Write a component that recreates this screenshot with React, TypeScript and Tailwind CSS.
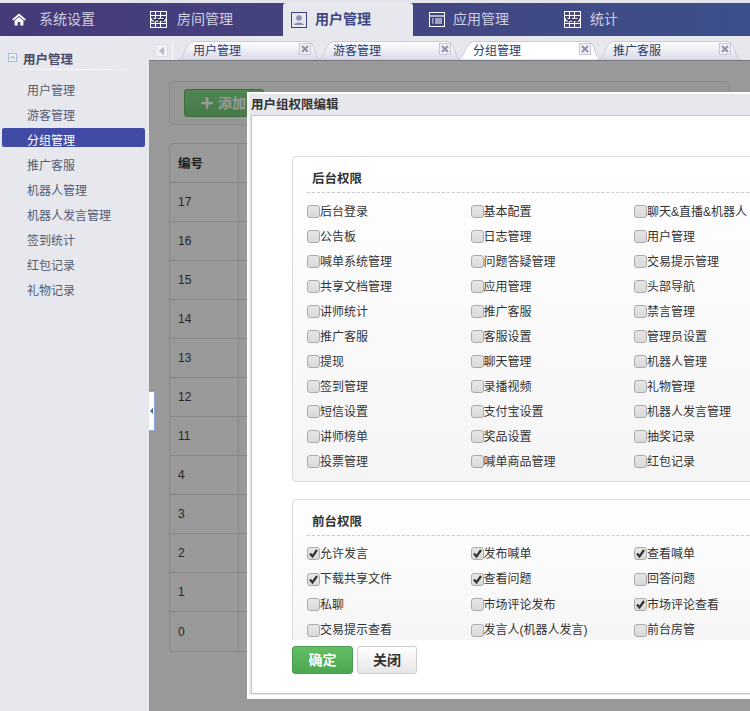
import React from 'react';
import { Plus } from 'lucide-react';

const FONT = '"Liberation Sans", "Noto Sans CJK SC", sans-serif';

const backPerms = [
  ['后台登录', '基本配置', '聊天&直播&机器人'],
  ['公告板', '日志管理', '用户管理'],
  ['喊单系统管理', '问题答疑管理', '交易提示管理'],
  ['共享文档管理', '应用管理', '头部导航'],
  ['讲师统计', '推广客服', '禁言管理'],
  ['推广客服', '客服设置', '管理员设置'],
  ['提现', '聊天管理', '机器人管理'],
  ['签到管理', '录播视频', '礼物管理'],
  ['短信设置', '支付宝设置', '机器人发言管理'],
  ['讲师榜单', '奖品设置', '抽奖记录'],
  ['投票管理', '喊单商品管理', '红包记录'],
];

const frontPerms = [
  ['允许发言', '发布喊单', '查看喊单'],
  ['下载共享文件', '查看问题', '回答问题'],
  ['私聊', '市场评论发布', '市场评论查看'],
  ['交易提示查看', '发言人(机器人发言)', '前台房管'],
];
const frontChecked = ['允许发言', '发布喊单', '查看喊单', '下载共享文件', '查看问题', '市场评论查看'];

const sideItems = ['用户管理', '游客管理', '分组管理', '推广客服', '机器人管理', '机器人发言管理', '签到统计', '红包记录', '礼物记录'];
const tabs = ['用户管理', '游客管理', '分组管理', '推广客服'];
const ids = [17, 16, 15, 14, 13, 12, 11, 4, 3, 2, 1, 0];

const HomeIcon = () => (
  <svg width="14" height="13" viewBox="0 0 14 13" fill="#fff">
    <path d="M7 0.5 L14 6.6 L12.6 7.6 L7 2.9 L1.4 7.6 L0 6.6 Z" />
    <path d="M2.6 7.6 L7 3.9 L11.4 7.6 V12.5 H8.3 V9 H5.7 V12.5 H2.6 Z" />
  </svg>
);

const GridIcon = () => (
  <svg width="17" height="17" viewBox="0 0 17 17" fill="none">
    <rect x="0.5" y="0.5" width="16" height="16" fill="#4a4480" stroke="#fff" />
    <path d="M1 4.5H16M1 12.5H16M5.5 1V16M10.5 1V16" stroke="#fff" strokeWidth="1" />
    <path d="M1 7H16V10.5H1Z" fill="#e8e8f0" />
    <path d="M2 7.5 L5 9.5 L7 8 L9 9.5 L11 8.5 L13 9.5 L15 7" stroke="#1e1e2e" strokeWidth="1.5" />
  </svg>
);

const UserIcon = () => (
  <svg width="16" height="16" viewBox="0 0 16 16">
    <rect x="0.5" y="0.5" width="15" height="15" fill="#e7e8ee" stroke="#3f437f" />
    <circle cx="8" cy="6" r="2.8" fill="#8a8db4" />
    <path d="M3 13 C3 9.5 13 9.5 13 13 Z" fill="#8a8db4" />
  </svg>
);

const ListIcon = () => (
  <svg width="16" height="16" viewBox="0 0 16 16" fill="none">
    <rect x="0.5" y="0.5" width="15" height="14" stroke="#fff" fill="#3f4683" />
    <path d="M1 4H15" stroke="#fff" strokeWidth="1.2" />
    <path d="M3 7H4.5M6 7H13M3 9H4.5M6 9H13M3 11H4.5M6 11H13" stroke="#fff" strokeWidth="1" />
  </svg>
);

const CloseBox = () => (
  <span className="flex h-[12px] w-[12px] items-center justify-center border border-[#c6c8d8] bg-[#f0f0f5]">
    <svg width="8" height="8" viewBox="0 0 8 8">
      <path d="M1 1L7 7M7 1L1 7" stroke="#8f92a8" strokeWidth="2" />
    </svg>
  </span>
);

const Checkbox = ({ checked }: { checked?: boolean }) => (
  <span className="flex h-[13px] w-[13px] shrink-0 items-center justify-center rounded-[3px] border border-[#ababab] bg-gradient-to-b from-[#e6e6e6] to-[#dadada]">
    {checked && (
      <svg width="11" height="11" viewBox="0 0 11 11" fill="none">
        <path d="M2 5.5 L4.5 8.5 L9 2" stroke="#333" strokeWidth="2.2" />
      </svg>
    )}
  </span>
);

const PermPanel = ({ title, rows, checked, rowClass, listClass }: { title: string; rows: string[][]; checked?: string[]; rowClass: string; listClass: string }) => (
  <div className="rounded-[4px] border border-[#dddddd] bg-gradient-to-b from-white to-[#f5f5f5] pl-[14px]">
    <div className="h-[36px] border-b border-dashed border-[#c9c9c9] pl-[5px] pt-[13px] text-[12.5px] leading-[18px] font-bold text-[#333]">{title}</div>
    <div className={listClass}>
      {rows.map((row) => (
        <div key={row[0]} className={`flex ${rowClass}`}>
          {row.map((p) => (
            <label key={p} className="flex w-[163.5px] shrink-0 items-center text-[12px] whitespace-nowrap text-[#333]">
              <Checkbox checked={checked?.includes(p)} />
              {p}
            </label>
          ))}
        </div>
      ))}
    </div>
  </div>
);

const App: React.FC = () => {
  return (
    <div className="relative h-[711px] w-[750px] overflow-hidden bg-[#e7e8ee]" style={{ fontFamily: FONT }}>
      {/* top nav */}
      <div className="flex h-[36px] border-t-[3px] border-[#e4e4ec] bg-gradient-to-r from-[#463a78] to-[#3c4f8a]">
        <div className="flex w-[137px] items-center gap-[13px] pl-[12px] text-[14px] text-[#cfcfe0]">
          <HomeIcon /> 系统设置
        </div>
        <div className="flex w-[146px] items-center gap-[10px] pl-[13px] text-[14px] text-[#cfcfe0]">
          <GridIcon /> 房间管理
        </div>
        <div className="flex w-[130px] items-center gap-[8px] rounded-t-[3px] bg-[#e7e8ee] pl-[8px] text-[14px] font-bold text-[#3f437f]">
          <UserIcon /> 用户管理
        </div>
        <div className="flex w-[138px] items-center gap-[8px] pl-[16px] text-[14px] text-[#cfcfe0]">
          <ListIcon /> 应用管理
        </div>
        <div className="flex items-center gap-[9px] pl-[13px] text-[14px] text-[#cfcfe0]">
          <GridIcon /> 统计
        </div>
      </div>

      <div className="flex h-[675px]">
        {/* sidebar */}
        <div className="w-[149px] shrink-0 pl-[2px]">
          <div className="mt-[12px] flex h-[21px] items-center gap-[6px] pl-[6px] text-[12.5px] leading-[24px] font-bold text-[#4a4a68]">
            <span className="-mt-[3px] flex h-[9px] w-[9px] items-center justify-center border border-[#a9bcd8] bg-[#eef1f7]">
              <svg width="5" height="3" viewBox="0 0 5 3"><path d="M0 3L2.5 0L5 3" stroke="#9aa" fill="none" /></svg>
            </span>
            <span className="pt-[2px]">用户管理</span>
          </div>
          <div className="mb-[8px] h-[1px] w-[135px] bg-gradient-to-r from-[#e7e8ee] via-white to-[#e7e8ee]" />
          {sideItems.map((s, i) => (
            <div key={s} className={`mr-[4px] mb-[6px] h-[19px] pl-[25px] text-[12px] leading-[26px] ${i === 2 ? 'rounded-[2px] bg-[#414ba5] text-white' : 'text-[#555a70]'}`}>
              {s}
            </div>
          ))}
        </div>

        {/* main */}
        <div className="flex min-w-0 flex-1 flex-col">
          <div className="relative flex h-[24px] shrink-0 items-end pt-[5px] pl-[6px]">
            <span className="mb-[3px] flex h-[13px] w-[13px] items-center justify-center border border-[#dcdde6] bg-[#f0f0f5]">
              <svg width="5" height="8" viewBox="0 0 5 8"><path d="M5 0V8L0 4Z" fill="#b5b7c6" /></svg>
            </span>
            <span className="mb-0 ml-[4px] h-[19px] w-px bg-[#f8f8fb]" />
            <div className="ml-[5px] flex">
              {tabs.map((t, i) => (
                <div key={t} className="relative flex h-[19px] w-[140px] shrink-0 items-center pl-[15px] text-[12px] text-[#2b3a70]">
                  <svg className="absolute top-0 left-0" width="146" height="19" viewBox="0 0 146 19">
                    <defs>
                      <linearGradient id={`tab${i}`} x1="0" y1="0" x2="0" y2="1">
                        <stop offset="0" stopColor="#ffffff" />
                        <stop offset="1" stopColor={i === 2 ? '#ffffff' : '#d9dae6'} />
                      </linearGradient>
                    </defs>
                    <path d="M0 19 C6 19 7 1 16 0.5 H130 C138 1 136 19 144 19 Z" fill={`url(#tab${i})`} stroke="#c9cbdc" strokeWidth="1" />
                  </svg>
                  <span className="relative">{t}</span>
                  <span className="absolute top-[2px] left-[121px]"><CloseBox /></span>
                </div>
              ))}
            </div>
          </div>

          <div className="flex-1 border-t border-[#c4c6d8] bg-white px-[20px] pt-[20px]">
            <div className="flex h-[44px] items-center rounded-[4px] border border-[#e6e6e6] bg-[#fcfcfc] pl-[14px]">
              <div className="flex h-[28px] w-[80px] items-center gap-[3px] rounded-[3px] border border-[#68b56d] bg-gradient-to-b from-[#85e08a] to-[#74cc7a] pl-[14px] text-[14px] font-bold text-white">
                <Plus size={16} strokeWidth={4} /> 添加
              </div>
            </div>
            <div className="mt-[18px] w-[600px] rounded-[4px] border border-[#e2e2e2]">
              <div className="flex h-[39px] items-center border-b border-[#e2e2e2]">
                <div className="flex h-full w-[69px] items-center border-r border-[#e2e2e2] pt-[3px] pl-[8px] text-[12.5px] font-bold text-[#333]">编号</div>
              </div>
              {ids.map((n, i) => (
                <div key={n} className={`flex h-[39px] ${i < ids.length - 1 ? 'border-b border-[#e2e2e2]' : ''}`}>
                  <div className="flex h-full w-[69px] items-center border-r border-[#e2e2e2] pl-[8px] text-[12px] text-[#444]">{n}</div>
                </div>
              ))}
            </div>
          </div>
        </div>
      </div>

      {/* modal mask over the content area */}
      <div className="absolute top-[60px] right-0 bottom-0 left-[149px] bg-black/40" />

      {/* collapse handle */}
      <div className="absolute top-[391px] left-[149px] flex h-[40px] w-[6px] items-center justify-center border border-l-0 border-[#8fa8dc] bg-white">
        <svg width="3" height="6" viewBox="0 0 3 6"><path d="M3 0V6L0 3Z" fill="#3d5f9a" /></svg>
      </div>

      {/* dialog */}
      <div className="absolute top-[92px] left-[247px] h-[607px] w-[600px] border-2 border-b-4 border-white bg-[#e7e8ee] pl-[2px] pb-[1px]">
        <div className="h-[22px] border-b border-[#c4c6d8] text-[12.5px] leading-[23px] font-bold text-[#333]">用户组权限编辑</div>
        <div className="h-[578px] border-b border-l border-[#c4c6d8] bg-white pl-[40px]">
          <div className="h-[524px] overflow-hidden pt-[40px]">
            <PermPanel title="后台权限" rows={backPerms} rowClass="h-[25px] items-center" listClass="pt-[6px] pb-[7px]" />
            <div className="mt-[17px]">
              <PermPanel title="前台权限" rows={frontPerms} checked={frontChecked} rowClass="h-[25.5px] items-center" listClass="pt-[5px] pb-[7px]" />
            </div>
          </div>
          <div className="mt-[6px] flex gap-[4px]">
            <button className="h-[28px] w-[61px] rounded-[3px] border border-[#4a9c4f] bg-gradient-to-b from-[#62bd65] to-[#4ca750] text-[14px] font-bold text-white">确定</button>
            <button className="h-[28px] w-[60px] rounded-[3px] border border-[#cccccc] bg-gradient-to-b from-white to-[#e6e6e6] text-[14px] font-bold text-[#333]">关闭</button>
          </div>
        </div>
      </div>
    </div>
  );
};

export default App;
